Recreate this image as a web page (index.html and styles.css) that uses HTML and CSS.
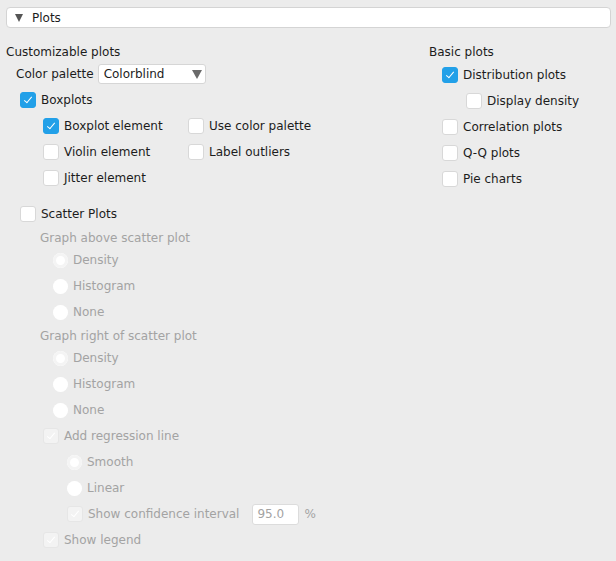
FILE: index.html
```html
<!DOCTYPE html>
<html>
<head>
<meta charset="utf-8">
<link rel="stylesheet" href="styles.css">
</head>
<body>
<div class="header"><span class="tri"></span><span class="header-text">Plots</span></div>
<div class="content">
  <div class="col-left">
    <div class="row h22 title">Customizable plots</div>
    <div class="row h22 palette">
      <span class="palette-label">Color palette</span>
      <div class="combo"><span>Colorblind</span><span class="arrow"></span></div>
    </div>
    <div class="row h26 mt2 in14"><span class="cb on"></span>Boxplots</div>
    <div class="subgrid">
      <div class="row h26"><span class="cb on"></span>Boxplot element</div>
      <div class="row h26"><span class="cb"></span>Use color palette</div>
      <div class="row h26"><span class="cb"></span>Violin element</div>
      <div class="row h26"><span class="cb"></span>Label outliers</div>
      <div class="row h26"><span class="cb"></span>Jitter element</div>
    </div>
    <div class="row h26 mt10 in14"><span class="cb"></span>Scatter Plots</div>
    <div class="dis">
      <div class="row h22 mbm2 in34">Graph above scatter plot</div>
      <div class="row h26 in47"><span class="rd sel"></span>Density</div>
      <div class="row h26 in47"><span class="rd"></span>Histogram</div>
      <div class="row h26 in47"><span class="rd"></span>None</div>
      <div class="row h22 mbm2 in34">Graph right of scatter plot</div>
      <div class="row h26 in47"><span class="rd sel"></span>Density</div>
      <div class="row h26 in47"><span class="rd"></span>Histogram</div>
      <div class="row h26 in47"><span class="rd"></span>None</div>
      <div class="row h26 in37"><span class="cb dis-on"></span>Add regression line</div>
      <div class="row h26 in61"><span class="rd sel"></span>Smooth</div>
      <div class="row h26 in61"><span class="rd"></span>Linear</div>
      <div class="row h26 in61"><span class="cb dis-on"></span>Show confidence interval<span class="num">95.0</span><span class="pct">%</span></div>
      <div class="row h26 in37"><span class="cb dis-on"></span>Show legend</div>
    </div>
  </div>
  <div class="col-right">
    <div class="row h22 title">Basic plots</div>
    <div class="row h24 in13"><span class="cb on"></span>Distribution plots</div>
    <div class="row h26 mt1 in37"><span class="cb"></span>Display density</div>
    <div class="row h26 in13"><span class="cb"></span>Correlation plots</div>
    <div class="row h26 in13"><span class="cb"></span>Q-Q plots</div>
    <div class="row h26 in13"><span class="cb"></span>Pie charts</div>
  </div>
</div>
</body>
</html>
```

FILE: styles.css
```css
html, body {
  margin: 0;
  padding: 0;
  background: #ececec;
  font-family: "DejaVu Sans", sans-serif;
  font-size: 12px;
  color: #1c1c1c;
}

.header {
  margin: 7px 5px 0 6px;
  height: 19px;
  border: 1px solid #d4d4d4;
  border-radius: 4px;
  background: #ffffff;
  display: flex;
  align-items: center;
}

.tri {
  width: 0;
  height: 0;
  margin-left: 8px;
  margin-right: 9px;
  border-left: 4.5px solid transparent;
  border-right: 4.5px solid transparent;
  border-top: 8px solid #555555;
}

.content {
  display: flex;
  padding: 13px 0 0 6px;
}

.col-left {
  width: 423px;
  flex: none;
}

.col-right {
  flex: 1;
}

.row {
  display: flex;
  align-items: center;
  white-space: nowrap;
}

.h22 { height: 22px; }
.h24 { height: 24px; }
.h26 { height: 26px; }
.mt1 { margin-top: 1px; }
.mt2 { margin-top: 2px; }
.mt10 { margin-top: 10px; }
.mbm2 { margin-bottom: -2px; }

.in13 { padding-left: 13px; }
.in14 { padding-left: 14px; }
.in34 { padding-left: 34px; }
.in37 { padding-left: 37px; }
.in47 { padding-left: 47px; }
.in61 { padding-left: 61px; }

.palette {
  padding-left: 10px;
}

.palette-label {
  margin-right: 4px;
}

.combo {
  width: 98px;
  height: 18px;
  border: 1px solid #d6d6d6;
  border-radius: 3px;
  background: #ffffff;
  display: flex;
  align-items: center;
  justify-content: space-between;
  padding: 0 3px 0 5px;
}

.arrow {
  width: 0;
  height: 0;
  border-left: 5px solid transparent;
  border-right: 5px solid transparent;
  border-top: 9px solid #6a6a6a;
}

.subgrid {
  display: grid;
  grid-template-columns: 145px auto;
  padding-left: 37px;
}

.cb {
  width: 14px;
  height: 14px;
  border: 1px solid #d8d8d8;
  border-radius: 3px;
  background: #ffffff;
  margin-right: 5px;
  flex: none;
  position: relative;
  box-sizing: content-box;
}

.cb.on {
  background: #22a0e8;
  border-color: #22a0e8;
}

.cb.on::after,
.cb.dis-on::after {
  content: "";
  position: absolute;
  left: 5px;
  top: 2px;
  width: 3px;
  height: 7px;
  border-right: 1.5px solid #ffffff;
  border-bottom: 1.5px solid #ffffff;
  transform: rotate(40deg);
}

.cb.dis-on {
  background: #f3f3f3;
  border-color: #e6e6e6;
}

.rd {
  width: 15px;
  height: 15px;
  border-radius: 50%;
  background: #ffffff;
  margin-right: 5px;
  flex: none;
  box-shadow: 0 0 1px #f0f0f0;
}

.rd.sel {
  box-shadow: inset 0 0 0 3px #f4f4f4, 0 0 1px #f0f0f0;
}

.dis {
  color: #a3a3a3;
}

.num {
  margin-left: 13px;
  width: 41px;
  height: 19px;
  padding-left: 4px;
  border: 1px solid #dcdcdc;
  border-radius: 3px;
  background: #ffffff;
  display: flex;
  align-items: center;
}

.pct {
  margin-left: 5px;
}
```
